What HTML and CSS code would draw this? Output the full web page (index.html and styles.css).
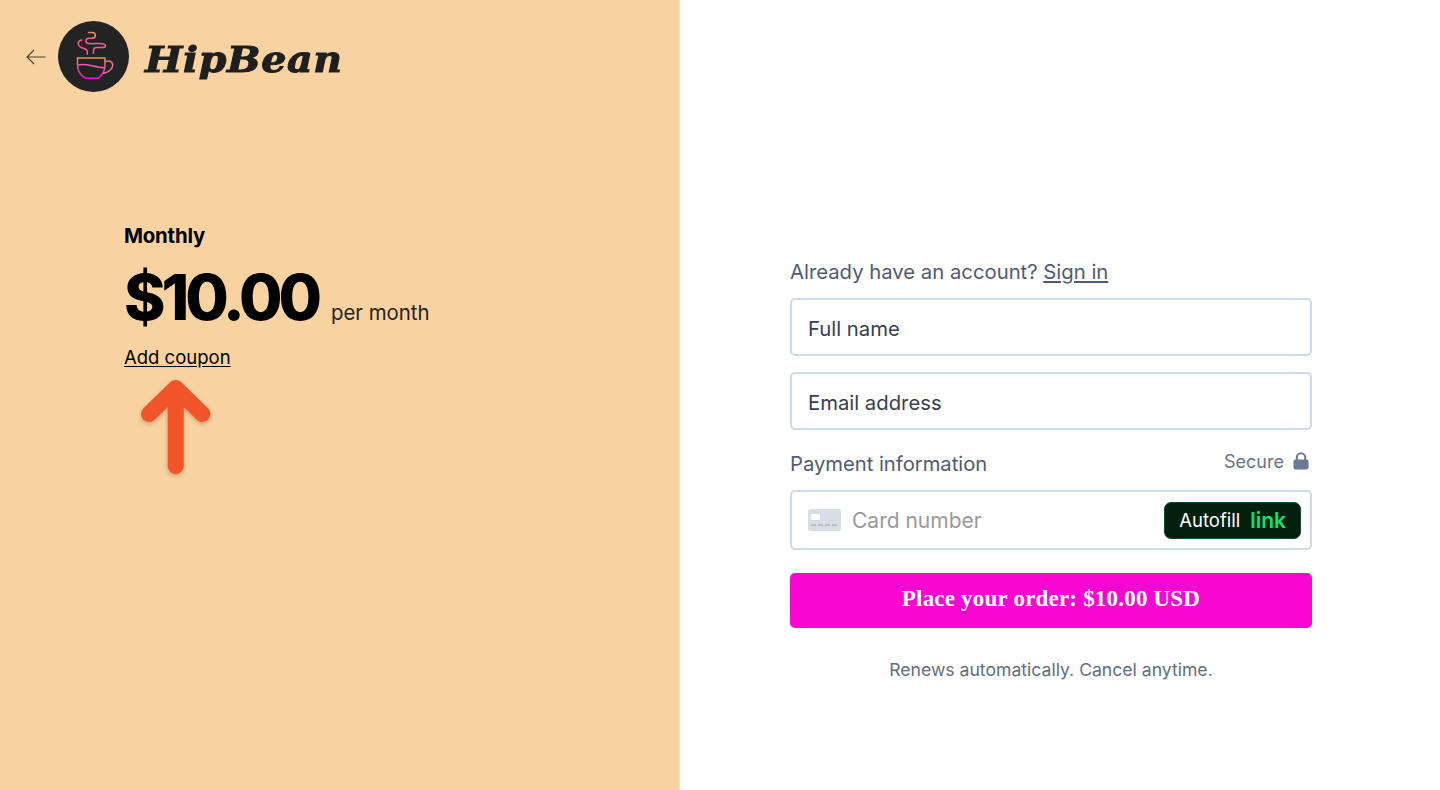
FILE: index.html
```html
<!DOCTYPE html>
<html lang="en">
<head>
<meta charset="utf-8">
<title>HipBean checkout</title>
<link rel="stylesheet" href="styles.css">
</head>
<body>
<main class="page">
  <section class="summary">
    <header class="brand">
      <svg class="back" viewBox="0 0 20 16" width="20" height="16" fill="none" stroke="#4a4033" stroke-width="1.1"><path d="M19.5 8H1M8 1 1 8l7 7"/></svg>
      <svg class="logo" viewBox="0 0 71 71" width="71" height="71" fill="none" stroke-width="1.500" stroke-linecap="round" stroke-linejoin="round">
        <defs><linearGradient id="g" gradientUnits="userSpaceOnUse" x1="0" y1="37" x2="0" y2="58"><stop offset="0" stop-color="#e0935a"/><stop offset=".4" stop-color="#e85a9a"/><stop offset="1" stop-color="#f50cd0"/></linearGradient></defs>
        <circle cx="35.500" cy="35.500" r="35.500" fill="#232323"/>
        <path stroke="#e0905a" d="M30.500 11.500h3.800c1.800 0 3 1.300 3 3s-1.400 2.800-3 2.800"/>
        <path stroke="#e8609a" d="M34.300 17.300h-3.500c-1.700 0-2.800 1-2.800 2.400 0 1.600 1.200 2.800 3 2.900 5 .2 11-.2 13.500.1 2 .3 3 1 3 2 0 1.300-1.600 1.900-3.500 1.900h-5.500c-1.600 0-3 .7-3 2.600v3"/>
        <path stroke="#e8609a" d="M24 19c-2.300 0-3.800 1.900-3.800 3.300 0 2.700 2.800 4.400 5.800 5.200 2 .6 3.300 2 3.300 3.300v2.500"/>
        <path stroke="url(#g)" d="M19.500 37H47v7c0 5.500-3 10.500-7 13.300H27.500c-4.500-2.800-8-7.800-8-13.300z"/>
        <path stroke="#ee5aa8" d="M19.800 44c5-.9 9.500-.3 14 .7 4.500 1.100 9 2 13 2"/>
        <path stroke="#e5708f" d="M47 40.500c4-1.500 7.800.3 7.800 3.500 0 3.800-4.300 7.600-9.300 8.300"/>
      </svg>
      <span class="wordmark">HipBean</span>
    </header>
    <div class="plan">
      <h2 class="plan-name">Monthly</h2>
      <p class="price-row"><span class="price">$10.00</span><span class="period">per month</span></p>
      <a class="coupon" href="#">Add coupon</a>
      <svg class="pointer" viewBox="0 0 71 96" width="71" height="96" fill="none" stroke="#f2552a" stroke-width="16" stroke-linecap="round" stroke-linejoin="round"><path d="M35.700 88V10M9 36 35.700 10 62.400 36"/></svg>
    </div>
  </section>
  <section class="checkout">
    <p class="signin">Already have an account? <a href="#">Sign in</a></p>
    <div class="field"><span>Full name</span></div>
    <div class="field"><span>Email address</span></div>
    <div class="pay-head">
      <span class="pay-label">Payment information</span>
      <span class="secure">Secure
        <svg viewBox="0 0 16 18" width="16" height="18"><path fill="none" stroke="#6b7a94" stroke-width="2" d="M3.800 8V5.500a4.200 4.200 0 0 1 8.400 0V8"/><rect x="0.500" y="7.500" width="15" height="10" rx="2" fill="#6b7a94"/></svg>
      </span>
    </div>
    <div class="field card">
      <svg viewBox="0 0 33 22" width="33" height="22"><rect width="33" height="22" rx="2.500" fill="#d9dde6"/><rect x="3" y="5" width="9" height="6" rx="1" fill="#fff"/><path stroke="#aeb5c4" stroke-width="1.500" d="M3 16h5M10 16h5M17 16h5M24 16h5"/></svg>
      <span class="placeholder">Card number</span>
      <span class="autofill">Autofill <b>link</b></span>
    </div>
    <button class="order" type="button">Place your order: $10.00 USD</button>
    <p class="renew">Renews automatically. Cancel anytime.</p>
  </section>
</main>
</body>
</html>
```
FILE: styles.css
```css
* { box-sizing: border-box; }
html, body { margin: 0; height: 100%; }
body { font-family: Inter, "Liberation Sans", sans-serif; background: #fff; overflow: hidden; }
.page { display: flex; height: 790px; }

.summary { width: 680px; background: #f8d3a1; border-right: 1px solid #f3e2cb; padding: 21px 0 0 26px; }
.brand { display: flex; align-items: center; height: 71px; }
.back { margin-right: 12px; }
.logo { flex: none; }
.wordmark { margin-left: 16px; font: italic 700 35px/1 "DejaVu Serif", serif; letter-spacing: .6px; color: #1f1f1f; -webkit-text-stroke: 1px #1f1f1f; transform: scaleX(1.130); transform-origin: left center; position: relative; top: 3px; }

.plan { display: flex; flex-direction: column; align-items: flex-start; padding: 131px 0 0 98px; }
.plan-name { margin: 0; font-size: 20.400px; line-height: 26px; font-weight: 700; color: #000; letter-spacing: -.2px; }
.price-row { margin: 12px 0 0; display: flex; align-items: baseline; height: 72px; }
.price { font-size: 63px; line-height: 72px; font-weight: 800; letter-spacing: -4.100px; color: #000; }
.period { margin-left: 13px; font-size: 20.400px; color: #2a2218; }
.coupon { margin-top: 12px; font-size: 18.500px; line-height: 24px; color: #000; text-decoration: underline; text-underline-offset: 2px; }
.pointer { margin: 9px 0 0 16px; filter: drop-shadow(0 2px 2px rgba(90,50,10,.3)); }

.checkout { width: 522px; margin-left: 110px; padding-top: 258px; display: flex; flex-direction: column; }
.signin { margin: 0 0 12px; font-size: 20.300px; line-height: 28px; color: #4f5b70; }
.signin a { color: #4f5b70; text-decoration: underline; }
.field { height: 58px; margin-bottom: 16px; padding: 2px 16px 0; display: flex; align-items: center; font-size: 20.300px; color: #36404f; border: 2px solid #d0d9e6; border-radius: 5px; background: #fff; }
.pay-head { display: flex; justify-content: space-between; align-items: flex-start; height: 42px; margin-top: 2px; padding-top: 2px; }
.pay-label { font-size: 20.200px; line-height: 28px; color: #4f5b70; }
.secure { display: flex; align-items: center; gap: 9px; height: 24px; margin-top: -1px; font-size: 18px; color: #66738b; padding-right: 3px; }
.card { height: 60px; margin-bottom: 23px; padding: 0 9px 0 16px; }
.placeholder { margin-left: 11px; flex: 1; color: #9a9a9a; font-size: 21px; }
.autofill { display: flex; align-items: center; gap: 10px; height: 37px; padding: 0 14px; background: #03200f; border: 1px solid #0f4a2a; border-radius: 7px; color: #fff; font-size: 18.500px; white-space: nowrap; }
.autofill b { color: #10e070; font-size: 21px; font-weight: 600; }
.order { height: 55px; padding: 0 0 4px; border: 0; border-radius: 5px; background: #f806d2; color: #fff; font: 700 23px "Liberation Serif", serif; letter-spacing: .2px; }
.renew { margin: 29px 0 0; text-align: center; font-size: 17.600px; line-height: 26px; color: #5f6d85; }
```
